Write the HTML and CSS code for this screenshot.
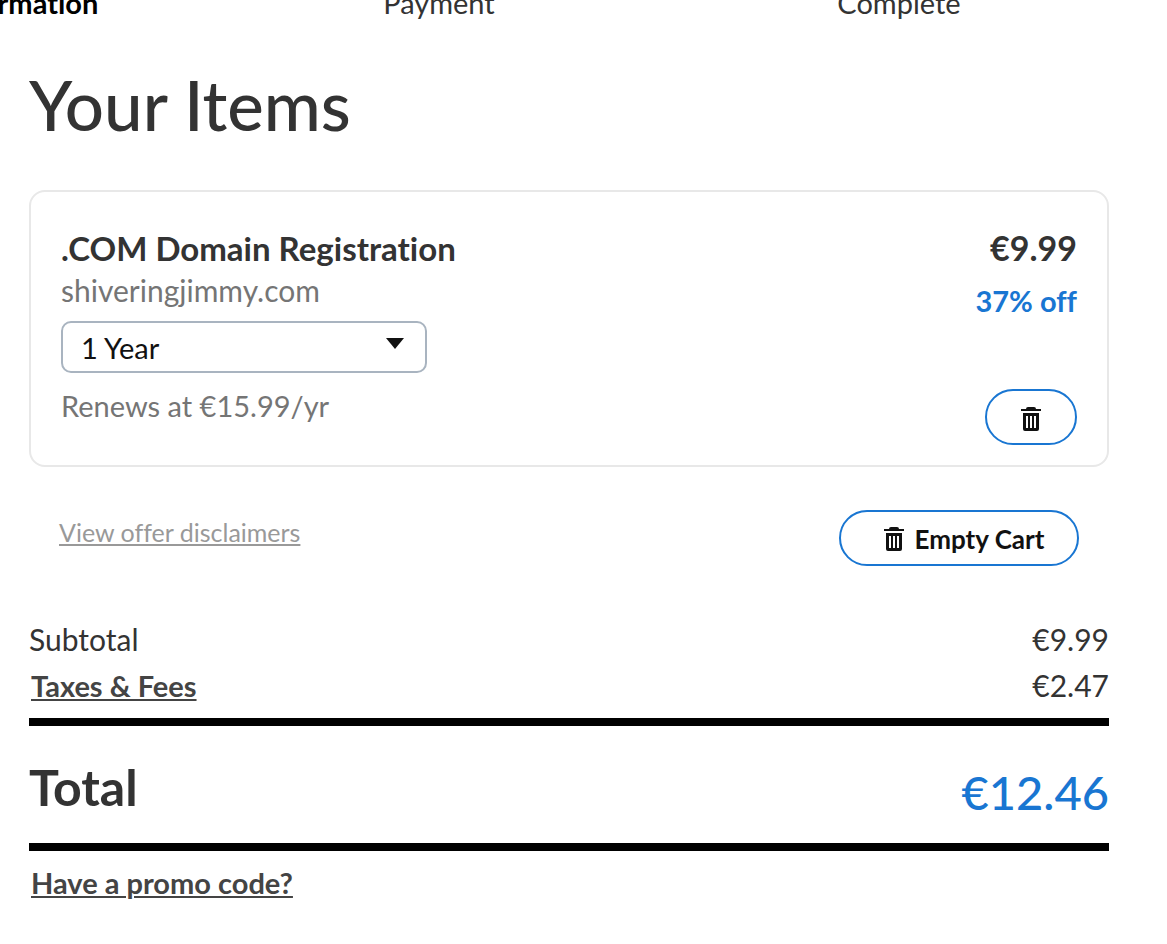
FILE: index.html
```html
<!DOCTYPE html>
<html lang="en">
<head>
<meta charset="utf-8">
<meta name="viewport" content="width=device-width, initial-scale=1">
<title>Your Items</title>
<link rel="stylesheet" href="styles.css">
</head>
<body>
<svg class="sprite" aria-hidden="true">
  <symbol id="trash" viewBox="0 0 20 24">
    <path fill="currentColor" fill-rule="evenodd" d="M0 2h5q0-2 2-2h6q2 0 2 2h5v2H0zM2 6h16v16q0 2-2 2H4q-2 0-2-2zM5 9v12h2V9zM9 9v12h2V9zM13 9v12h2V9z"/>
  </symbol>
</svg>
<ol class="steps">
  <li class="step step-current" aria-current="step">Billing Information</li>
  <li class="step">Payment</li>
  <li class="step">Complete</li>
</ol>
<main class="cart">
  <h1 class="title">Your Items</h1>
  <section class="item">
    <div class="details">
      <h2 class="name">.COM Domain Registration</h2>
      <p class="domain">shiveringjimmy.com</p>
      <div class="term">
        <select class="term-select" aria-label="Registration term">
          <option>1 Year</option>
        </select>
        <svg class="caret" viewBox="0 0 18 11" aria-hidden="true"><path d="M0 0h18L9 11z"/></svg>
      </div>
      <p class="renews">Renews at €15.99/yr</p>
    </div>
    <div class="pricing">
      <p class="price">€9.99</p>
      <p class="discount">37% off</p>
      <button class="pill remove" type="button" aria-label="Remove item"><svg class="trash"><use href="#trash"/></svg></button>
    </div>
  </section>
  <div class="actions">
    <a class="disclaimers" href="#">View offer disclaimers</a>
    <button class="pill empty" type="button"><svg class="trash" aria-hidden="true"><use href="#trash"/></svg>Empty Cart</button>
  </div>
  <dl class="summary">
    <div class="row"><dt>Subtotal</dt><dd>€9.99</dd></div>
    <div class="row"><dt><a class="link taxes" href="#">Taxes &amp; Fees</a></dt><dd>€2.47</dd></div>
    <div class="total"><dt class="total-label">Total</dt><dd class="total-value">€12.46</dd></div>
  </dl>
  <a class="link promo" href="#">Have a promo code?</a>
</main>
</body>
</html>
```
FILE: styles.css
```css
* { box-sizing: border-box; }
body {
  margin: 0;
  overflow-x: hidden;
  background: #fff;
  color: #333;
  font: 29px/36px Lato, "Open Sans", sans-serif;
  font-variant-ligatures: none;
}
h1, h2, p, dl, dd, ol { margin: 0; padding: 0; }
.sprite { display: none; }

.steps {
  display: grid;
  grid-template-columns: repeat(3, 1fr);
  margin: -15px 38px 0 -251px;
  list-style: none;
  text-align: center;
}
.step-current { color: #000; font-weight: 700; }

.cart { padding: 0 58px 40px 29px; }
.title {
  padding: 44px 0 45px;
  font-size: 69px;
  line-height: 80px;
  font-weight: 500;
}

.item {
  display: flex;
  justify-content: space-between;
  padding: 34px 30px 20px;
  border: 2px solid #e8e8e8;
  border-radius: 16px;
}
.name { font-size: 33px; line-height: 44px; font-weight: 700; }
.domain, .renews { color: #757575; }
.domain { font-size: 30px; line-height: 40px; }
.term { position: relative; width: 366px; margin: 11px 0 15px; }
.term-select {
  display: block;
  width: 100%;
  height: 52px;
  padding: 2px 48px 0 18px;
  border: 2px solid #a9b4c0;
  border-radius: 10px;
  appearance: none;
  background: #fff;
  color: #111;
  font: inherit;
}
.caret {
  position: absolute;
  top: 17px;
  right: 23px;
  width: 18px;
  height: 11px;
  fill: #111;
  pointer-events: none;
}
.renews { padding-bottom: 21px; }
.pricing { display: flex; flex-direction: column; align-items: flex-end; }
.price { font-size: 34px; line-height: 44px; font-weight: 700; }
.discount { margin-top: 13px; color: #1976d2; font-weight: 700; }
.pill {
  display: flex;
  align-items: center;
  justify-content: center;
  height: 56px;
  padding: 1px 32px 0 42px;
  border: 2px solid #1976d2;
  border-radius: 28px;
  background: #fff;
  color: #111;
  font: 700 26px/32px Lato, "Open Sans", sans-serif;
}
.trash { width: 20px; height: 24px; }
.remove { width: 92px; margin-top: auto; padding: 4px 0 0; }

.actions {
  display: flex;
  justify-content: space-between;
  padding: 43px 30px 0;
}
.disclaimers {
  margin-top: 4px;
  color: #999;
  font-size: 25px;
  text-underline-offset: 2px;
  text-decoration-thickness: 2px;
}
.empty { width: 240px; gap: 11px; }

.summary { padding-top: 50px; }
.row { display: flex; justify-content: space-between; font-size: 30px; line-height: 46px; }
.link {
  color: #444;
  font-weight: 700;
  text-underline-offset: 2px;
  text-decoration-thickness: 2px;
}
.taxes { margin-left: 2px; font-size: 29px; }
.total {
  display: flex;
  justify-content: space-between;
  align-items: center;
  margin-top: 9px;
  border: solid #000;
  border-width: 8px 0;
  padding: 31px 0 21px;
  line-height: 60px;
}
.total-label { padding-bottom: 5px; font-size: 50px; font-weight: 700; }
.total-value { padding-top: 5px; color: #1976d2; font-size: 47px; font-weight: 500; }
.promo { display: inline-block; margin: 14px 0 0 2px; }
```
